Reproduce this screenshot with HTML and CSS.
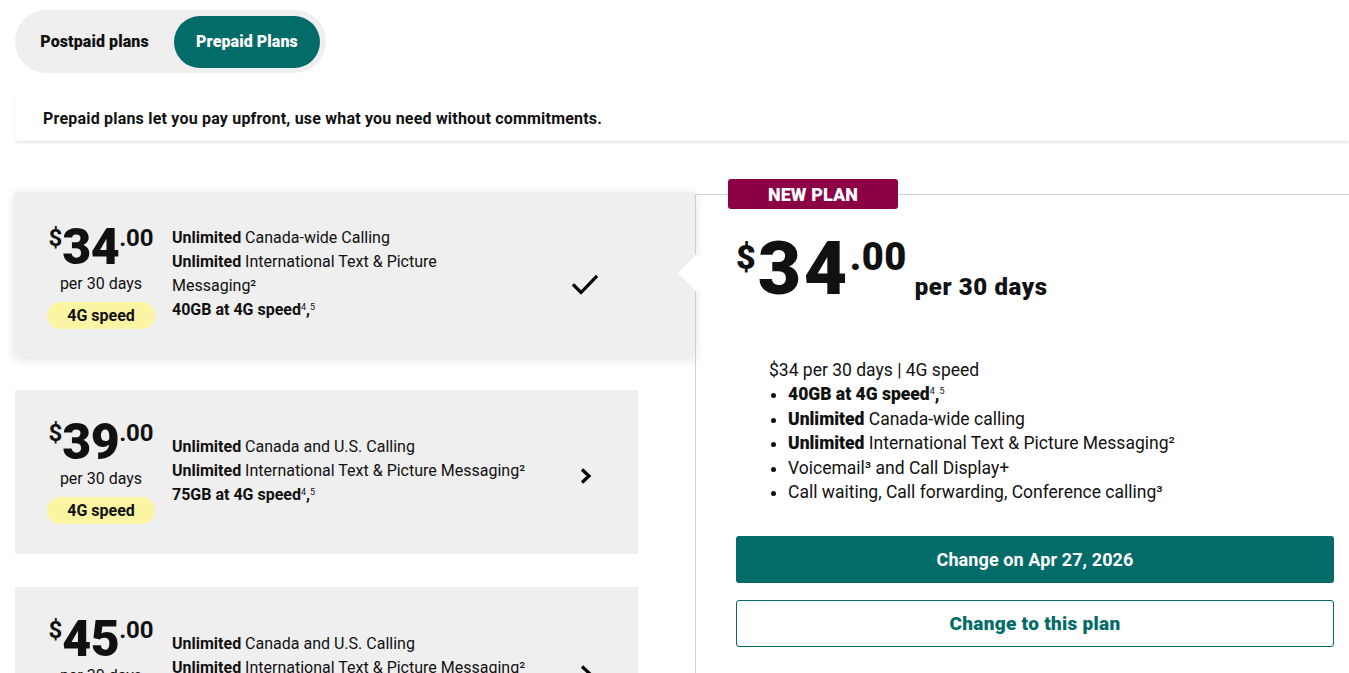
FILE: index.html
```html
<!DOCTYPE html>
<html lang="en">
<head>
<meta charset="utf-8">
<title>Prepaid Plans</title>
<link rel="stylesheet" href="styles.css">
</head>
<body>
<div class="page">
  <div class="toggle">
    <button class="toggle-btn">Postpaid plans</button>
    <button class="toggle-btn active">Prepaid Plans</button>
  </div>

  <div class="intro">Prepaid plans let you pay upfront, use what you need without commitments.</div>

  <div class="main">
    <div class="plans">
      <div class="card selected">
        <div class="price-col">
          <div class="price"><span class="cur">$</span><span class="amt">34</span><span class="cents">.00</span></div>
          <div class="per">per 30 days</div>
          <div class="speed">4G speed</div>
        </div>
        <div class="features">
          <div><b>Unlimited</b> Canada-wide Calling</div>
          <div><b>Unlimited</b> International Text &amp; Picture Messaging²</div>
          <div><b>40GB at 4G speed</b><sup>4</sup><b>,</b><sup>5</sup></div>
        </div>
        <div class="icon">
          <svg width="26" height="22" viewBox="0 0 26 22"><path d="M2 11.5 L9 18.5 L24 3" fill="none" stroke="#000" stroke-width="3.2" stroke-linecap="square"/></svg>
        </div>
      </div>

      <div class="card">
        <div class="price-col">
          <div class="price"><span class="cur">$</span><span class="amt">39</span><span class="cents">.00</span></div>
          <div class="per">per 30 days</div>
          <div class="speed">4G speed</div>
        </div>
        <div class="features">
          <div><b>Unlimited</b> Canada and U.S. Calling</div>
          <div><b>Unlimited</b> International Text &amp; Picture Messaging²</div>
          <div><b>75GB at 4G speed</b><sup>4</sup><b>,</b><sup>5</sup></div>
        </div>
        <div class="icon">
          <svg width="14" height="18" viewBox="0 0 14 18"><path d="M3 2.5 L10 9 L3 15.5" fill="none" stroke="#000" stroke-width="3.2" stroke-linejoin="miter"/></svg>
        </div>
      </div>

      <div class="card">
        <div class="price-col">
          <div class="price"><span class="cur">$</span><span class="amt">45</span><span class="cents">.00</span></div>
          <div class="per">per 30 days</div>
          <div class="speed">4G speed</div>
        </div>
        <div class="features">
          <div><b>Unlimited</b> Canada and U.S. Calling</div>
          <div><b>Unlimited</b> International Text &amp; Picture Messaging²</div>
          <div><b>100GB at 4G speed</b><sup>4</sup><b>,</b><sup>5</sup></div>
        </div>
        <div class="icon">
          <svg width="14" height="18" viewBox="0 0 14 18"><path d="M3 2.5 L10 9 L3 15.5" fill="none" stroke="#000" stroke-width="3.2" stroke-linejoin="miter"/></svg>
        </div>
      </div>
    </div>

    <div class="detail">
      <span class="pointer"></span>
      <div class="badge">NEW PLAN</div>
      <div class="big-price">
        <span class="cur">$</span><span class="amt">34</span><span class="cents">.00</span><span class="per">per 30 days</span>
      </div>
      <div class="summary">
        <div class="summary-title">$34 per 30 days | 4G speed</div>
        <ul>
          <li><b>40GB at 4G speed</b><sup>4</sup><b>,</b><sup>5</sup></li>
          <li><b>Unlimited</b> Canada-wide calling</li>
          <li><b>Unlimited</b> International Text &amp; Picture Messaging²</li>
          <li>Voicemail³ and Call Display+</li>
          <li>Call waiting, Call forwarding, Conference calling³</li>
        </ul>
      </div>
      <div class="actions">
        <button class="btn primary">Change on Apr 27, 2026</button>
        <button class="btn secondary">Change to this plan</button>
      </div>
    </div>
  </div>
</div>
</body>
</html>
```

FILE: styles.css
```css
* { box-sizing: border-box; }
html, body { margin: 0; padding: 0; background: #fff; overflow: hidden; }
body {
  font-family: Roboto, "Liberation Sans", Arial, sans-serif;
  color: #111;
  width: 1349px;
  height: 673px;
}
.page { padding: 10px 0 0 15px; }

.toggle {
  display: inline-flex;
  align-items: center;
  background: #efefef;
  border-radius: 32px;
  height: 63px;
  width: 311px;
  padding: 0 6px;
  gap: 6px;
}
.toggle-btn {
  font-family: Roboto, "Liberation Sans", sans-serif;
  font-weight: 900;
  font-size: 16px;
  letter-spacing: 0.1px;
  border: none;
  background: transparent;
  color: #111;
  height: 52px;
  width: 147px;
  padding: 0;
  border-radius: 26px;
}
.toggle-btn.active {
  background: #036b68;
  color: #fff;
  width: 146px;
}

.intro {
  margin-top: 23px;
  height: 45px;
  display: flex;
  align-items: center;
  padding-left: 28px;
  font-weight: 700;
  font-size: 16px;
  letter-spacing: 0.2px;
  background: #fff;
  box-shadow: 0 2px 3px rgba(0,0,0,0.10);
}

.main {
  display: flex;
  margin-top: 51px;
  align-items: flex-start;
}
.plans {
  width: 680px;
  display: flex;
  flex-direction: column;
  gap: 33px;
}
.card {
  width: 623px;
  height: 164px;
  background: #efefef;
  display: flex;
  align-items: flex-start;
  padding: 29px 0 0 31px;
}
.card.selected {
  width: 680px;
  height: 165px;
  box-shadow: 0 2px 10px rgba(0,0,0,0.13);
  padding-top: 32px;
}
.price-col {
  width: 110px;
  display: flex;
  flex-direction: column;
  align-items: center;
}
.price {
  display: flex;
  align-items: flex-start;
  font-weight: 700;
  line-height: 1;
}
.price .cur { font-size: 24px; margin-top: 2px; }
.price .amt { font-size: 50px; font-weight: 900; line-height: 46px; letter-spacing: -0.5px; }
.price .cents { font-size: 24px; margin-top: 2px; }
.per {
  font-size: 16px;
  margin-top: 5px;
  line-height: 18px;
}
.speed {
  margin-top: 9px;
  width: 108px;
  height: 27px;
  border-radius: 14px;
  background: #fbf4a2;
  font-weight: 700;
  font-size: 16px;
  display: flex;
  align-items: center;
  justify-content: center;
}
.features {
  margin-left: 16px;
  margin-top: 2px;
  width: 300px;
  font-size: 16px;
  line-height: 24px;
}
.card:not(.selected) .features { width: 380px; margin-top: 16px; }
.features b { font-weight: 700; }
.features sup, .summary sup { font-size: 9px; vertical-align: top; position: relative; top: -3px; }
.icon {
  display: flex;
  align-items: center;
  justify-content: center;
}
.card.selected .icon { margin: 50px 0 0 100px; }
.card:not(.selected) .icon { margin: 48px 0 0 27px; }

.detail {
  position: relative;
  flex: 1;
  height: 480px;
  border-top: 1px solid #cfcfcf;
  border-left: 1px solid #cfcfcf;
  padding: 40px 15px 0 40px;
  margin-top: 2px;
}
.pointer {
  position: absolute;
  left: -13px;
  top: 65px;
  width: 26px;
  height: 26px;
  background: #fff;
  transform: rotate(45deg);
  box-shadow: 2px -2px 0 0 #fff;
}
.badge {
  position: absolute;
  left: 32px;
  top: -16px;
  width: 170px;
  height: 30px;
  background: #8c0046;
  color: #fff;
  border-radius: 3px;
  font-weight: 900;
  font-size: 18px;
  letter-spacing: 0.1px;
  display: flex;
  align-items: center;
  justify-content: center;
}
.big-price {
  display: flex;
  align-items: flex-start;
  font-weight: 900;
  line-height: 1;
}
.big-price .cur { font-size: 34px; margin-top: 5px; }
.big-price .amt { font-size: 75px; line-height: 66px; letter-spacing: 2.5px; margin-left: 2px; }
.big-price .cents { font-size: 38px; margin-top: 3px; letter-spacing: 0.5px; }
.big-price .per {
  font-size: 24px;
  font-weight: 900;
  margin-top: 43px;
  margin-left: 8px;
  letter-spacing: 0.6px;
}
.summary {
  margin-top: 57px;
  padding-left: 33px;
  font-size: 17.5px;
  line-height: 24.4px;
}
.summary ul {
  margin: 0;
  padding-left: 19px;
}
.summary li::marker { font-size: 17px; }
.summary b { font-weight: 900; }
.actions {
  margin-top: 32px;
  display: flex;
  flex-direction: column;
  gap: 17px;
}
.btn {
  width: 598px;
  height: 47px;
  border-radius: 3px;
  font-family: Roboto, "Liberation Sans", sans-serif;
  font-weight: 700;
  font-size: 18px;
  letter-spacing: 0.1px;
}
.btn.primary { background: #036b68; color: #fff; border: none; }
.btn.secondary {
  background: #fff;
  color: #036b68;
  border: 1px solid #036b68;
  font-weight: 900;
  font-size: 19px;
  letter-spacing: 0.3px;
}
```
